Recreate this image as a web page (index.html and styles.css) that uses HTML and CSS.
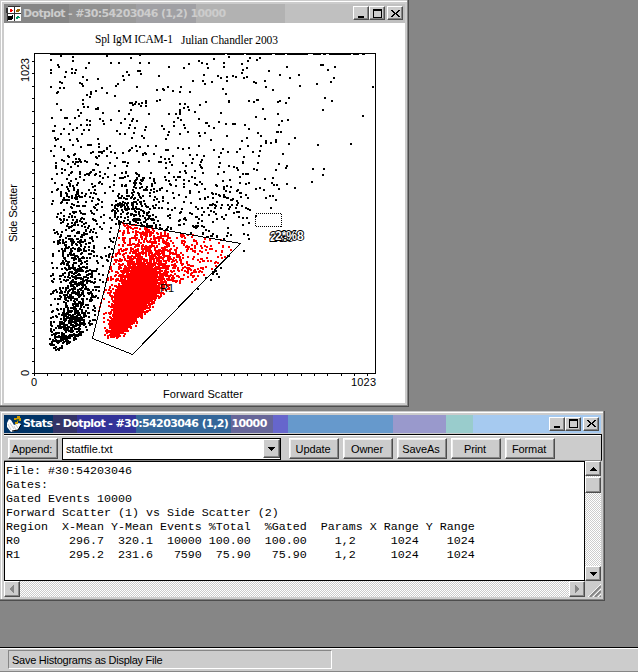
FILE: index.html
```html
<!DOCTYPE html>
<html lang="en">

<head>
    <meta charset="UTF-8" />
    <meta name="viewport" content="width=device-width, initial-scale=1.0" />
    <title>Dotplot</title>
    <link rel="stylesheet" href="styles.css">
</head>

<body>
    <main class="desktop">
        <section class="window plot-window">
            <header class="title-bar inactive">
                <svg class="title-icon" width="16" height="16" viewBox="0 0 16 16" shape-rendering="crispEdges">
                    <path d="M2 1h13v14H2z" fill="#fff" />
                    <path d="M2 0h12v1H2zM0 2h2v5H0zM1 7h1v8H1zM8 1h1v14H8zM2 7h13v1H2z" fill="#333" />
                    <path d="M4 3h2v1h1v1H6v1H4z" fill="#f00" />
                    <path d="M10 4h1V3h3v2h-1v1h-3z" fill="#996600" />
                    <path d="M2 10h4V9h1v4H6v1H2z" fill="#000" />
                    <path d="M11 10h2v1h1v1h-2v1h-2v-2h1z" fill="#009966" />
                </svg>
                <h1 class="title">Dotplot - #30:54203046 (1,2) 10000</h1>
                <div class="controls">
                    <button class="control"><svg width="9" height="9"><path d="M1 7h6v2H1z" /></svg></button>
                    <button class="control"><svg width="9" height="9"><path fill-rule="evenodd" d="M0 0h9v9H0zM1 2v6h7V2z" /></svg></button>
                    <button class="control close"><svg width="9" height="9"><path d="M0 1h2v1h1v1h1v1h1V3h1V2h1V1h2v1H8v1H7v1H6v1h1v1h1v1h1v1H7V7H6V6H5V5H4v1H3v1H2v1H0V7h1V6h1V5h1V4H2V3H1V2H0z" /></svg></button>
                </div>
            </header>
            <svg class="plot" width="401" height="380" viewBox="4 23 401 380">
                <text class="heading" x="95" y="43" textLength="78">Spl IgM ICAM-1</text>
                <text class="heading" x="181" y="44" textLength="97">Julian Chandler 2003</text>

                <g shape-rendering="crispEdges">
                    <path id="black-dots" />
                    <path id="red-dots" fill="#f00" />
                    <path id="ticks" />
                    <path fill-rule="evenodd" d="M34 53h342v321H34zM35 54v319h340V54z" />
                    <path d="M50 54h175v1H50zM227 54h17v1h-17zM246 54h26v1h-26zM275 54h10v1h-10zM287 54h21v1h-21zM313 54h8v1h-8zM323 54h3v1h-3zM329 54h22v1h-22zM353 54h6v1h-6zM362 54h3v1h-3z" />
                    <path class="gate" d="M120.5 222.5L240.5 243.5L132.5 354.5L92.5 338.5Z" />
                    <rect class="selection" x="255.500" y="213.500" width="26" height="13" />
                </g>

                <text class="label" x="160" y="292">R1</text>
                <g class="percent">
                    <text x="270" y="241">24.8</text>
                    <text x="275" y="240">2*%8</text>
                </g>

                <text class="label" x="31" y="386">0</text>
                <text class="label" x="351" y="386" textLength="25">1023</text>
                <text class="label" x="163" y="398" textLength="80">Forward Scatter</text>
                <text class="label" transform="translate(29 376) rotate(-90)">0</text>
                <text class="label" transform="translate(29 82) rotate(-90)" textLength="24">1023</text>
                <text class="label" transform="translate(17 242) rotate(-90)" textLength="58">Side Scatter</text>
            </svg>
        </section>

        <section class="window stats-window">
            <header class="title-bar active">
                <svg class="title-icon" width="16" height="16" viewBox="0 0 16 16">
                    <path d="M1 7l2-4 2 1 3 5 5-2 2 1-3 6-7 2-4-5z" fill="#fff" />
                    <path d="M2 8l3 6M4 7l4 6M8 10l2 4M10 9l2 3" stroke="#ccc" fill="none" />
                    <path d="M8 2h3V0h3v2h1v3h-3v3H9V6h2V4H8z" fill="#cc9900" />
                    <path d="M10 3h3v2h-2z" fill="#336633" />
                    <path d="M6 15l6-1 3-5" stroke="#000" fill="none" />
                </svg>
                <h1 class="title">Stats - Dotplot - #30:54203046 (1,2) 10000</h1>
                <div class="controls">
                    <button class="control"><svg width="9" height="9"><path d="M1 7h6v2H1z" /></svg></button>
                    <button class="control"><svg width="9" height="9"><path fill-rule="evenodd" d="M0 0h9v9H0zM1 2v6h7V2z" /></svg></button>
                    <button class="control close"><svg width="9" height="9"><path d="M0 1h2v1h1v1h1v1h1V3h1V2h1V1h2v1H8v1H7v1H6v1h1v1h1v1h1v1H7V7H6V6H5V5H4v1H3v1H2v1H0V7h1V6h1V5h1V4H2V3H1V2H0z" /></svg></button>
                </div>
            </header>
            <div class="toolbar">
                <button class="btn">Append:</button>
                <div class="combo">
                    <span class="combo-text">statfile.txt</span>
                    <button class="combo-btn"><svg width="7" height="4"><path d="M0 0h7v1H6v1H5v1H4v1H3V3H2V2H1V1H0z" /></svg></button>
                </div>
                <button class="btn">Update</button>
                <button class="btn">Owner</button>
                <button class="btn">SaveAs</button>
                <button class="btn">Print</button>
                <button class="btn">Format</button>
            </div>
            <div class="report">
                <pre class="report-text">File: #30:54203046
Gates:
Gated Events 10000
Forward Scatter (1) vs Side Scatter (2)
Region  X-Mean Y-Mean Events %Total  %Gated  Params X Range Y Range
R0       296.7  320.1  10000 100.00  100.00    1,2     1024    1024
R1       295.2  231.6   7590  75.90   75.90    1,2     1024    1024</pre>
                <div class="scroll vertical">
                    <button class="scroll-btn"><svg width="7" height="4"><path d="M3 0h1v1h1v1h1v1h1v1H0V3h1V2h1V1h1z" /></svg></button>
                    <div class="thumb"></div>
                    <button class="scroll-btn end"><svg width="7" height="4"><path d="M0 0h7v1H6v1H5v1H4v1H3V3H2V2H1V1H0z" /></svg></button>
                </div>
                <div class="scroll horizontal">
                    <button class="scroll-btn disabled"><svg width="5" height="8"><path d="M4 0v8H3V7H2V6H1V5H0V3h1V2h1V1h1V0z" /></svg></button>
                    <button class="scroll-btn disabled end"><svg width="5" height="8"><path d="M0 0h1v1h1v1h1v1h1v2H3v1H2v1H1v1H0z" /></svg></button>
                </div>
                <svg class="grip" width="16" height="16">
                    <path d="M3 16L16 3M8 16l8-8M13 16l3-3" stroke="#fff" />
                    <path d="M5 16L16 5M10 16l6-6M15 16l1-1" stroke="#868686" stroke-width="2" />
                </svg>
            </div>
        </section>
    </main>
    <footer class="status-bar">
        <div class="status">Save Histograms as Display File</div>
    </footer>
    <script src="script.js"></script>
</body>

</html>
```

FILE: styles.css
```css
* {
    margin: 0;
    padding: 0;
    box-sizing: border-box;
}

:root {
    --face: #cccccc;
    --shadow: #868686;
    --dark: #4d4d4d;
}

body {
    display: flex;
    flex-direction: column;
    height: 672px;
    overflow: hidden;
    background: var(--shadow);
    font: 11px "Liberation Sans", Arial, sans-serif;
    color: #000;
}

button {
    font: inherit;
    color: inherit;
    background: var(--face);
    display: flex;
    align-items: center;
    justify-content: center;
    border: 1px solid;
    border-color: #fff var(--dark) var(--dark) #fff;
    box-shadow: inset -1px -1px var(--shadow);
}

button svg {
    shape-rendering: crispEdges;
}

.desktop {
    position: relative;
    flex: 1;
}

/* Windows */
.window {
    position: absolute;
    left: 0;
    display: flex;
    flex-direction: column;
    padding: 4px;
    background: var(--face);
    box-shadow: inset -1px -1px var(--dark), inset -2px -2px var(--shadow), inset 1px 1px var(--face), inset 2px 2px #fff;
}

.plot-window {
    top: 0;
    width: 409px;
    height: 407px;
}

.stats-window {
    top: 411px;
    width: 605px;
    height: 190px;
}

.title-bar {
    display: flex;
    align-items: center;
    flex: none;
    gap: 2px;
    padding: 0 2px;
}

.inactive {
    height: 19px;
    color: var(--face);
    background: linear-gradient(90deg, #868686 65px, #909090 65px 106px, #999999 106px 132px, #a0a0a4 132px 192px, #b2b2b2 192px 281px, #c0c0c0 281px);
}

.active {
    height: 18px;
    color: #fff;
    background: linear-gradient(90deg, #003366 49px, #333366 49px 73px, #333399 73px 132px, #336699 132px 227px, #666699 227px 269px, #6666cc 269px 284px, #6699cc 284px 389px, #9999cc 389px 442px, #99cccc 442px 469px, #a6caf0 469px);
}

.title {
    flex: 1;
    font: bold 11px/14px "DejaVu Sans", Verdana, sans-serif;
    letter-spacing: -0.64px;
    white-space: nowrap;
}

.active .title {
    margin-left: -1px;
    letter-spacing: -0.6px;
}

.inactive .title {
    margin-left: -1px;
}

.controls {
    display: flex;
    margin-bottom: 1px;
}

.control {
    width: 16px;
    height: 14px;
}

.close {
    margin-left: 2px;
}

/* Dotplot */
.plot {
    display: block;
    flex: none;
    background: #fff;
}

.heading {
    font: 11.500px "Liberation Serif", "Times New Roman", serif;
}

.label {
    font: 11px "Liberation Sans", Arial, sans-serif;
}

.gate {
    fill: none;
    stroke: #000;
}

.selection {
    fill: none;
    stroke: #000;
    stroke-dasharray: 1 1;
}

.percent {
    font: bold 12px "Liberation Sans", Arial, sans-serif;
    fill: #fff;
    stroke: #000;
    stroke-width: 1.8px;
    paint-order: stroke;
}

/* Stats */
.toolbar {
    display: flex;
    gap: 4px;
    flex: none;
    width: 598px;
    height: 27px;
    padding: 3px 0 0 4px;
    margin-top: 1px;
    border-top: 1px solid #000;
    border-right: 1px solid #000;
    border-bottom: 1px solid var(--shadow);
    box-shadow: inset 0 1px #fff;
}

.btn {
    width: 50px;
    height: 21px;
    padding-right: 2px;
    letter-spacing: -0.1px;
    box-shadow: inset -1px -1px var(--shadow), inset 1px 1px #f0f0f0;
}

.combo {
    display: flex;
    width: 219px;
    height: 22px;
    margin-right: 4px;
    border: 1px solid #000;
    background: #fff;
}

.combo-text {
    flex: 1;
    padding-left: 3px;
    line-height: 20px;
}

.combo-btn {
    width: 17px;
    height: 19px;
}

.report {
    display: grid;
    grid-template-columns: 581px 16px;
    grid-template-rows: 120px 16px;
}

.report-text {
    padding: 2px 0 0 1px;
    border: 1px solid #000;
    background: #fff;
    font: 11.667px/14px "Liberation Mono", "Courier New", monospace;
}

.scroll {
    display: flex;
    background: repeating-conic-gradient(#fff 0 25%, #cccccc 0 50%) 0 0 / 2px 2px;
}

.vertical {
    flex-direction: column;
}

.scroll-btn {
    width: 16px;
    height: 15px;
}

.horizontal .scroll-btn {
    height: 16px;
}

.thumb {
    height: 16px;
    margin-top: 1px;
    background: var(--face);
    border: 1px solid;
    border-color: #fff var(--dark) var(--dark) #fff;
    box-shadow: inset -1px -1px var(--shadow);
}

.disabled {
    fill: var(--shadow);
}

.vertical .end {
    margin-top: auto;
}

.horizontal .end {
    margin-left: auto;
}

/* Status bar */
.status-bar {
    height: 25px;
    padding: 2px 0 0 8px;
    background: var(--face);
    border-top: 1px solid #000;
    border-bottom: 1px solid var(--shadow);
    box-shadow: inset 0 1px #fff;
}

.status {
    width: 324px;
    height: 19px;
    padding-left: 3px;
    line-height: 19px;
    letter-spacing: -0.26px;
    border: 1px solid;
    border-color: var(--shadow) #fff #fff var(--shadow);
}
```

FILE: script.js
```js
const gate = [[120, 222], [240, 243], [132, 354], [92, 338]];

// sparse events, x y pairs
const events = [
    51,60, 61,56, 73,57, 73,61, 58,65, 59,67, 51,70, 51,73, 72,69, 76,70, 72,73, 75,73, 66,72, 65,77, 86,68, 89,63,
    107,56, 111,63, 119,63, 131,58, 140,55, 140,63, 127,72, 129,75, 123,76, 124,80, 138,71, 140,71, 141,74, 149,63,
    159,76, 169,67, 184,68, 189,64, 199,61, 202,63, 207,64, 204,75, 193,81, 203,81, 205,84, 98,79, 83,77, 80,83,
    82,84, 83,86, 87,80, 60,82, 62,83, 64,88, 60,88, 58,92, 57,93, 51,87, 102,88, 96,91, 91,92, 91,94, 90,97, 87,95,
    83,100, 83,104, 107,93, 115,96, 116,86, 118,84, 137,87, 157,90, 163,89, 164,90, 173,91, 168,87, 181,87, 180,92,
    190,92, 157,101, 160,100, 130,103, 132,103, 133,105, 136,102, 139,104, 141,106, 142,103, 146,101, 146,103,
    146,106, 135,104, 57,104, 61,110, 78,110, 84,107, 88,107, 96,109, 98,109, 98,108, 103,113, 52,118, 65,118,
    67,118, 75,118, 79,116, 81,113, 87,120, 90,121, 100,119, 103,121, 104,124, 111,120, 119,111, 131,110, 129,114,
    149,114, 169,114, 176,114, 180,112, 180,114, 180,110, 180,104, 185,104, 184,108, 188,107, 189,110, 200,105,
    206,102, 195,112, 199,119, 178,118, 181,120, 174,122, 174,126, 162,126, 164,129, 169,132, 168,135, 166,139,
    184,125, 185,128, 188,132, 180,134, 199,133, 200,136, 205,133, 209,126, 206,123, 121,123, 125,119, 133,119,
    132,121, 137,121, 130,125, 129,128, 117,131, 120,134, 125,134, 134,133, 135,128, 146,127, 145,130, 142,136,
    144,138, 132,138, 55,126, 53,131, 54,131, 61,134, 55,138, 56,140, 58,139, 64,129, 70,124, 69,134, 73,130,
    77,128, 81,125, 84,130, 87,125, 90,125, 89,130, 82,134, 77,139, 78,141, 98,139, 99,144, 90,145, 81,147, 73,145,
    70,140, 110,146, 107,148, 107,149, 104,151, 102,152,
    214,59, 229,57, 224,63, 224,67, 208,68, 218,76, 221,78, 227,77, 227,81, 212,82, 223,89, 226,94, 229,101,
    229,102, 221,113, 219,122, 226,124, 233,124, 235,124, 207,123, 214,128, 211,140, 227,136, 214,150, 223,149,
    221,153, 228,152, 219,157, 220,163, 219,167, 229,166, 234,167, 237,168, 238,170, 218,174, 224,172, 230,180,
    223,181, 216,185, 217,186, 224,187, 227,186, 231,187, 224,189, 226,191, 224,195, 224,197, 220,196, 212,193,
    208,197, 241,197, 246,195, 248,198, 237,201, 233,76, 236,77, 242,64, 243,70, 242,73, 244,78, 247,68, 247,77,
    248,61, 250,58, 257,60, 260,58, 254,82, 256,83, 265,81, 266,87, 273,90, 269,71, 280,75, 287,67, 290,78, 299,75,
    300,86, 317,84, 321,65, 323,65, 328,70, 335,67, 334,78, 331,82, 325,98, 332,101, 323,110, 363,116, 373,87,
    249,101, 254,102, 257,100, 258,100, 289,98, 286,103, 278,102, 280,101, 263,109, 278,114, 256,117, 265,119,
    282,121, 288,120, 279,125, 277,132, 278,132, 281,132, 245,125, 249,129, 258,133, 261,136, 247,138, 242,141,
    248,146, 266,141, 266,143, 271,143, 276,140, 276,142, 261,146, 289,144, 295,138, 318,145, 351,144, 260,151,
    259,156, 253,152, 283,154, 240,149, 237,152, 244,157, 243,162, 243,163, 258,163, 254,169, 257,170, 279,164,
    276,170, 287,166, 286,168, 313,169, 324,169, 323,175, 312,182, 295,188, 287,184, 279,189, 277,185, 274,185,
    272,183, 273,178, 265,179, 264,190, 260,188, 256,189, 270,196, 273,196, 266,198, 276,200, 271,208, 249,183,
    246,184, 240,183, 243,174, 246,174, 248,174, 240,177, 238,190, 256,216, 208,208, 210,205, 212,205, 215,205,
    216,206, 228,205, 232,205, 229,209, 237,205, 238,203, 242,206, 246,208, 248,209, 250,210, 234,213, 237,212,
    239,212, 214,212, 216,214, 209,215, 222,217, 224,219, 243,218, 247,218, 249,223, 244,234, 248,235, 249,239,
    244,251, 211,280, 214,272, 217,274, 221,268, 219,277, 213,274, 216,271, 198,289
];

let seed = 30;

function random() {
    seed = (seed * 16807) % 2147483647;
    return seed / 2147483647;
}

function gauss() {
    return Math.sqrt(-2 * Math.log(random())) * Math.cos(2 * Math.PI * random());
}

function inGate(x, y) {
    let inside = false;
    for (let i = 0, j = 3; i < 4; j = i++) {
        const [xi, yi] = gate[i];
        const [xj, yj] = gate[j];
        if (yi > y !== yj > y && x < ((xj - xi) * (y - yi)) / (yj - yi) + xi) {
            inside = !inside;
        }
    }
    return inside;
}

let black = "";
let red = "";

function dot(x, y) {
    x = Math.round(x);
    y = Math.round(y);
    const square = `M${x - 1} ${y - 1}h2v2h-2z`;
    if (inGate(x, y)) {
        red += square;
    } else {
        black += square;
    }
}

function scatter(count, place) {
    for (let i = 0; i < count; i++) {
        const [x, y] = place();
        const low = x < 98 ? 358 - (x - 51) * 0.75 : 338;
        if (x > 50 && y > 145 && y < low) {
            // nothing falls in the empty lower right corner
            if (x < 125 || (x <= 170 && y < 338 - (x - 125) * 1.1) || (x > 170 && y < 284 && x + y < 485)) {
                dot(x, y);
            }
        }
    }
}

for (let i = 0; i < events.length; i += 2) {
    dot(events[i], events[i + 1]);
}

// debris column on the left
scatter(560, () => [76 + gauss() * 9, 145 + Math.sqrt(random()) * 180]);
scatter(290, () => [51 + random() * 43, 170 + Math.sqrt(random()) * 180]);
scatter(210, () => [66 + gauss() * 10, 335 + gauss() * 9]);
scatter(90, () => [90 + random() * 30, 150 + random() * 170]);
scatter(65, () => [52 + random() * 50, 145 + random() * 60]);

// events above the gate
scatter(170, () => [134 + gauss() * 12, 165 + Math.sqrt(random()) * 58]);
scatter(170, () => [110 + random() * 97, 145 + random() * 85]);
scatter(80, () => [145 + random() * 100, 190 + random() * 48]);

// gated population
scatter(6500, () => {
    const t = gauss() * 17;
    const s = gauss() * (7.5 + t * 0.1);
    return [132 + t * 0.46 + s * 0.89, 301 - t * 0.89 + s * 0.3];
});
scatter(650, () => [143 + gauss() * 19, 272 + gauss() * 23]);
scatter(280, () => [122 + random() * 45, 225 + random() * 50]);
scatter(260, () => [160 + random() * 72, 232 + random() * 50]);

let ticks = "";
for (let i = 0; i <= 25; i++) {
    ticks += `M32 ${Math.round(373 - i * 12.48)}h2v1h-2z`;
    ticks += `M${Math.round(34 + i * 13.33)} 374h1v2h-1z`;
}

document.getElementById("black-dots").setAttribute("d", black);
document.getElementById("red-dots").setAttribute("d", red);
document.getElementById("ticks").setAttribute("d", ticks);
```
